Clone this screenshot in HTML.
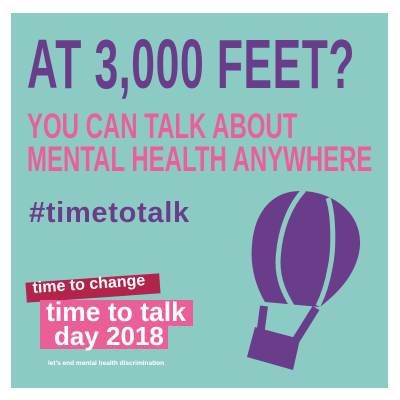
<!DOCTYPE html>
<html><head><meta charset="utf-8"><style>
html,body{margin:0;padding:0;background:#fff;width:400px;height:400px;overflow:hidden;position:relative;font-family:"Liberation Sans",sans-serif}
.panel{position:absolute;left:11px;top:13px;width:377px;height:375px;background:#8ccbc4}
.t{position:absolute;white-space:nowrap;font-weight:bold;transform-origin:0 0}
</style></head><body>
<div class="panel"></div>
<div class="t" style="left:27px;top:24px;font-size:70px;color:#6a3d8a;transform:scaleX(0.61);letter-spacing:1px">AT 3,000 FEET?</div>
<div class="t" style="left:27px;top:110px;font-size:35px;color:#ea5f98;transform:scaleX(0.685);line-height:33px">YOU CAN TALK ABOUT<br>MENTAL HEALTH ANYWHERE</div>
<div class="t" style="left:29px;top:197px;font-size:29px;letter-spacing:0.7px;color:#6a3d8a">#timetotalk</div>

<div style="position:absolute;left:26px;top:278px;width:134px;height:20px;background:#b2244a;transform:rotate(-4deg)"></div>
<div class="t" style="left:32px;top:280px;font-size:16px;color:#fff;transform:rotate(-4deg)">time to change</div>
<div style="position:absolute;left:40px;top:300px;width:153px;height:26px;background:#ea5f98"></div>
<div style="position:absolute;left:40px;top:324px;width:128px;height:25px;background:#ea5f98"></div>
<div class="t" style="left:46px;top:297px;font-size:26.5px;color:#fff">time to talk</div>
<div class="t" style="left:54px;top:321px;font-size:26px;color:#fff">day 2018</div>
<div class="t" style="left:48px;top:360px;font-size:6.5px;color:#fff">let's end mental health discrimination</div>

<svg style="position:absolute;left:0;top:0" width="400" height="400">
<path d="M300,191 C335,191 362,215 360,245 C358,275 335,295 320,307 L265,302 C255,285 250,265 252,245 C254,215 270,191 300,191 Z" fill="#6a3d8a"/>
<path d="M304,190 C290,205 279,230 278,262 C278,280 284,293 292,306" stroke="#8ccbc4" stroke-width="5" fill="none"/>
<path d="M328,198 C334,215 334,250 330,268 C327,285 323,296 318,306" stroke="#8ccbc4" stroke-width="5" fill="none"/>
<path d="M264,306 L260,336" stroke="#6a3d8a" stroke-width="8"/>
<path d="M316,308 L296,340" stroke="#6a3d8a" stroke-width="8"/>
<path d="M255,327 L300,339 L293,370 L247,357 Z" fill="#6a3d8a"/>
</svg>
</body></html>
